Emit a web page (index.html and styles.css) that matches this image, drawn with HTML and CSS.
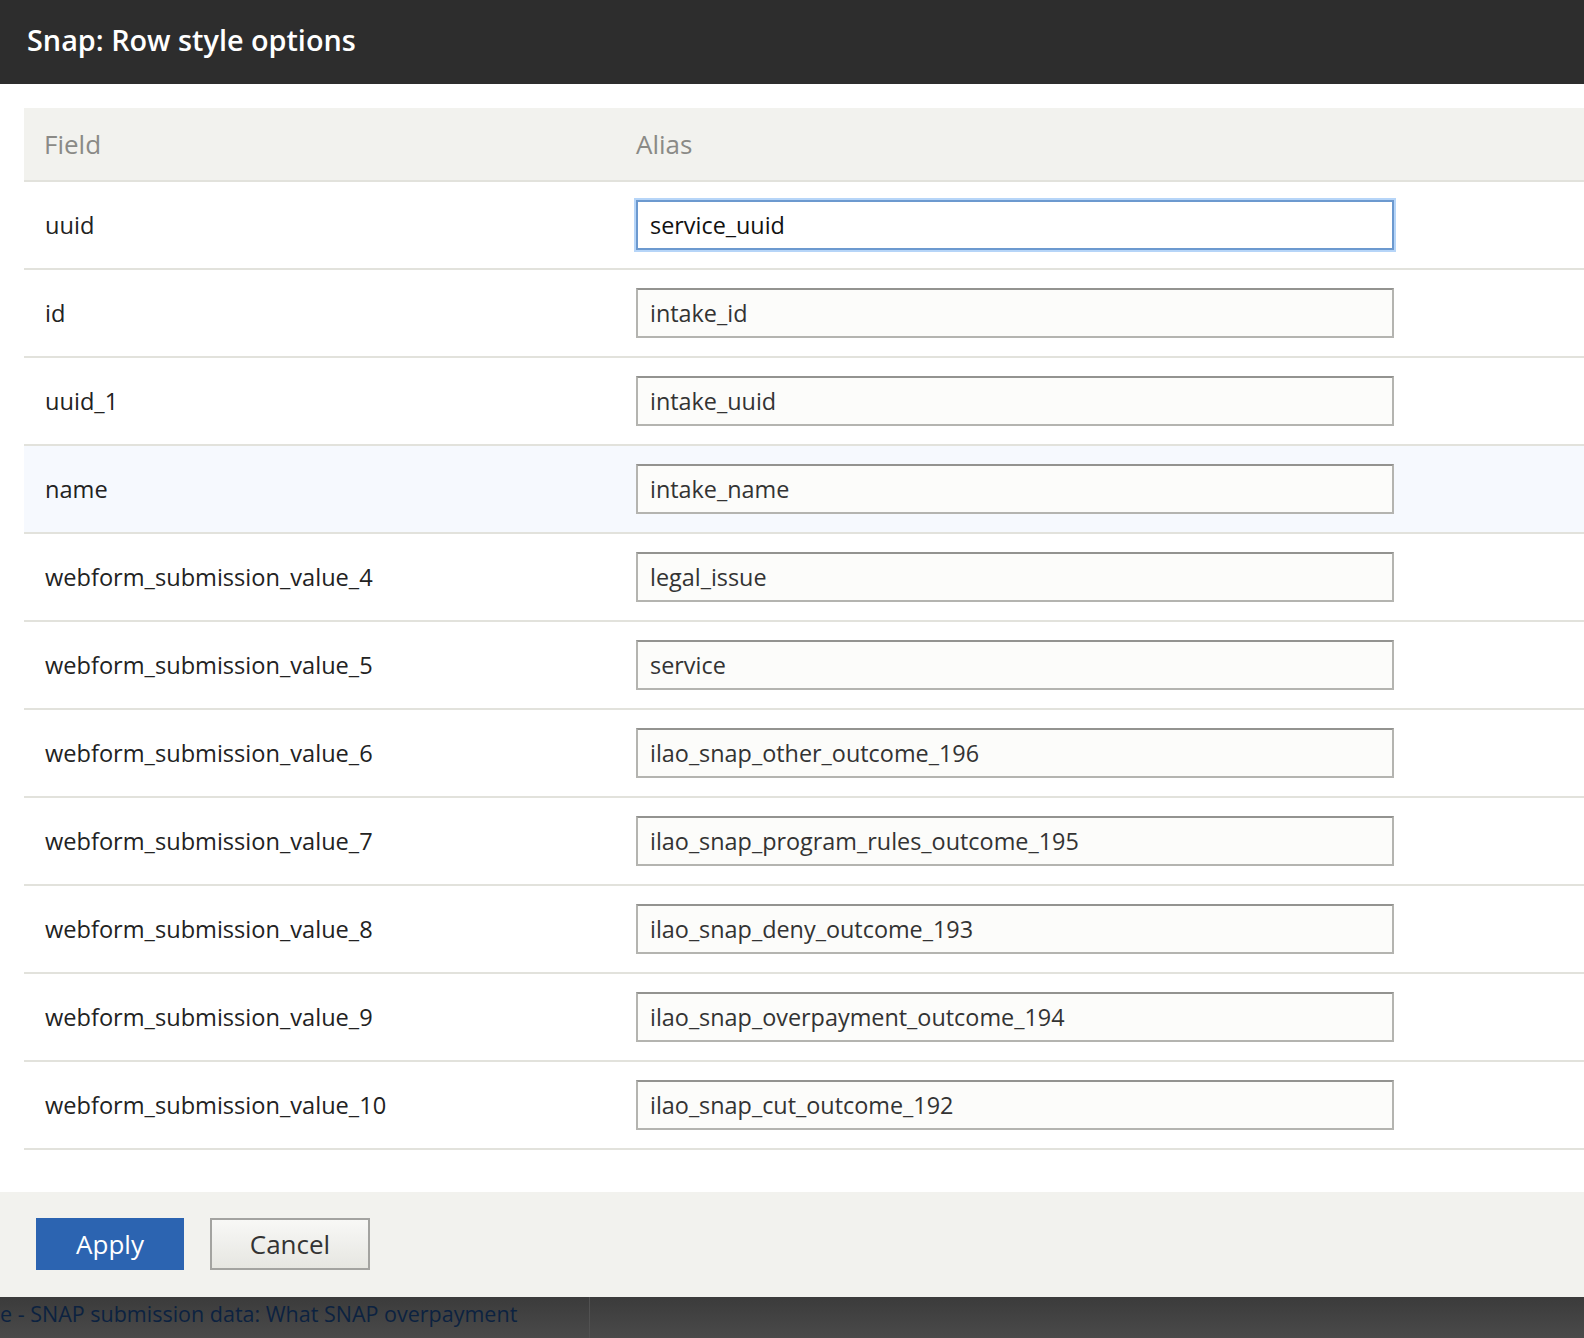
FILE: index.html
```html
<!DOCTYPE html>
<html lang="en">
<head>
    <meta charset="UTF-8">
    <meta name="viewport" content="width=device-width, initial-scale=1.0">
    <title>Snap: Row style options</title>
    <link rel="stylesheet" href="styles.css">
</head>
<body>
    <div class="dialog">
        <div class="dialog-titlebar">
            <span class="dialog-title">Snap: Row style options</span>
        </div>

        <div class="dialog-content">
            <table class="alias-table">
                <thead>
                    <tr>
                        <th class="col-field">Field</th>
                        <th>Alias</th>
                    </tr>
                </thead>
                <tbody>
                    <tr>
                        <td>uuid</td>
                        <td><input type="text" class="form-text is-focused" value="service_uuid"></td>
                    </tr>
                    <tr>
                        <td>id</td>
                        <td><input type="text" class="form-text" value="intake_id"></td>
                    </tr>
                    <tr>
                        <td>uuid_1</td>
                        <td><input type="text" class="form-text" value="intake_uuid"></td>
                    </tr>
                    <tr class="is-hover">
                        <td>name</td>
                        <td><input type="text" class="form-text" value="intake_name"></td>
                    </tr>
                    <tr>
                        <td>webform_submission_value_4</td>
                        <td><input type="text" class="form-text" value="legal_issue"></td>
                    </tr>
                    <tr>
                        <td>webform_submission_value_5</td>
                        <td><input type="text" class="form-text" value="service"></td>
                    </tr>
                    <tr>
                        <td>webform_submission_value_6</td>
                        <td><input type="text" class="form-text" value="ilao_snap_other_outcome_196"></td>
                    </tr>
                    <tr>
                        <td>webform_submission_value_7</td>
                        <td><input type="text" class="form-text" value="ilao_snap_program_rules_outcome_195"></td>
                    </tr>
                    <tr>
                        <td>webform_submission_value_8</td>
                        <td><input type="text" class="form-text" value="ilao_snap_deny_outcome_193"></td>
                    </tr>
                    <tr>
                        <td>webform_submission_value_9</td>
                        <td><input type="text" class="form-text" value="ilao_snap_overpayment_outcome_194"></td>
                    </tr>
                    <tr>
                        <td>webform_submission_value_10</td>
                        <td><input type="text" class="form-text" value="ilao_snap_cut_outcome_192"></td>
                    </tr>
                </tbody>
            </table>
        </div>

        <div class="dialog-buttonpane">
            <button class="button button-primary">Apply</button>
            <button class="button">Cancel</button>
        </div>
    </div>

    <!-- page underneath the modal overlay -->
    <div class="page-behind">
        <div class="page-behind-cell">e - SNAP submission data: What SNAP overpayment</div>
    </div>
</body>
</html>
```

FILE: styles.css
```css
body {
    margin: 0;
    font-family: 'Open Sans', 'Noto Sans', sans-serif;
    background: #fff;
    color: #222;
    overflow: hidden;
}

.dialog-titlebar {
    height: 84px;
    background-color: #2d2d2d;
    padding-left: 27px;
    box-sizing: border-box;
}

.dialog-title {
    display: block;
    color: #fff;
    font-size: 28.8px;
    font-weight: 600;
    line-height: 79px;
}

.dialog-content {
    padding: 24px 0 42px 24px;
}

.alias-table {
    width: 100%;
    border-collapse: collapse;
}

.alias-table th {
    height: 72px;
    padding: 0 20px;
    background-color: #f2f2ee;
    border-bottom: 2px solid #e2e2dc;
    color: #8a8a86;
    font-size: 26px;
    font-weight: 400;
    text-align: left;
}

.alias-table th.col-field {
    width: 552px;
}

.alias-table td {
    height: 86px;
    padding: 0 20px 0 21px;
    border-bottom: 2px solid #e2e2dc;
    font-size: 23.6px;
    color: #222;
    vertical-align: middle;
}

.alias-table td + td {
    padding-left: 20px;
}

.alias-table tr.is-hover td {
    background-color: #f6f9fe;
}

.form-text {
    display: block;
    width: 758px;
    height: 50px;
    box-sizing: border-box;
    padding: 0 12px;
    margin: 0;
    font-family: inherit;
    font-size: 23.4px;
    color: #333;
    background-color: #fcfcfa;
    border: 2px solid #b4b4b0;
    border-top-color: #939390;
    border-radius: 0;
    outline: none;
}

.form-text.is-focused {
    background-color: #fff;
    color: #111;
    border-color: #6c99cf;
    box-shadow: 0 0 0 2px #b6d5f8;
}

.dialog-buttonpane {
    height: 105px;
    box-sizing: border-box;
    padding: 26px 0 0 36px;
    background-color: #f2f2ee;
    display: flex;
    gap: 26px;
    align-items: flex-start;
}

.button {
    width: 160px;
    height: 52px;
    padding: 0;
    font-family: inherit;
    font-size: 26px;
    color: #333;
    background: linear-gradient(#f8f8f6, #e6e6e1);
    border: 2px solid #a3a3a0;
    border-radius: 0;
    cursor: pointer;
}

.button-primary {
    width: 148px;
    color: #fff;
    background: #2c64b1;
    border-color: #2c64b1;
}

.page-behind {
    height: 41px;
    background: linear-gradient(#3b3b3b, #4a4a4a);
    overflow: hidden;
}

.page-behind-cell {
    width: 589px;
    height: 100%;
    border-right: 1px solid #515151;
    color: #0c2240;
    font-size: 21.5px;
    line-height: 34px;
    white-space: nowrap;
    overflow: hidden;
}
```
